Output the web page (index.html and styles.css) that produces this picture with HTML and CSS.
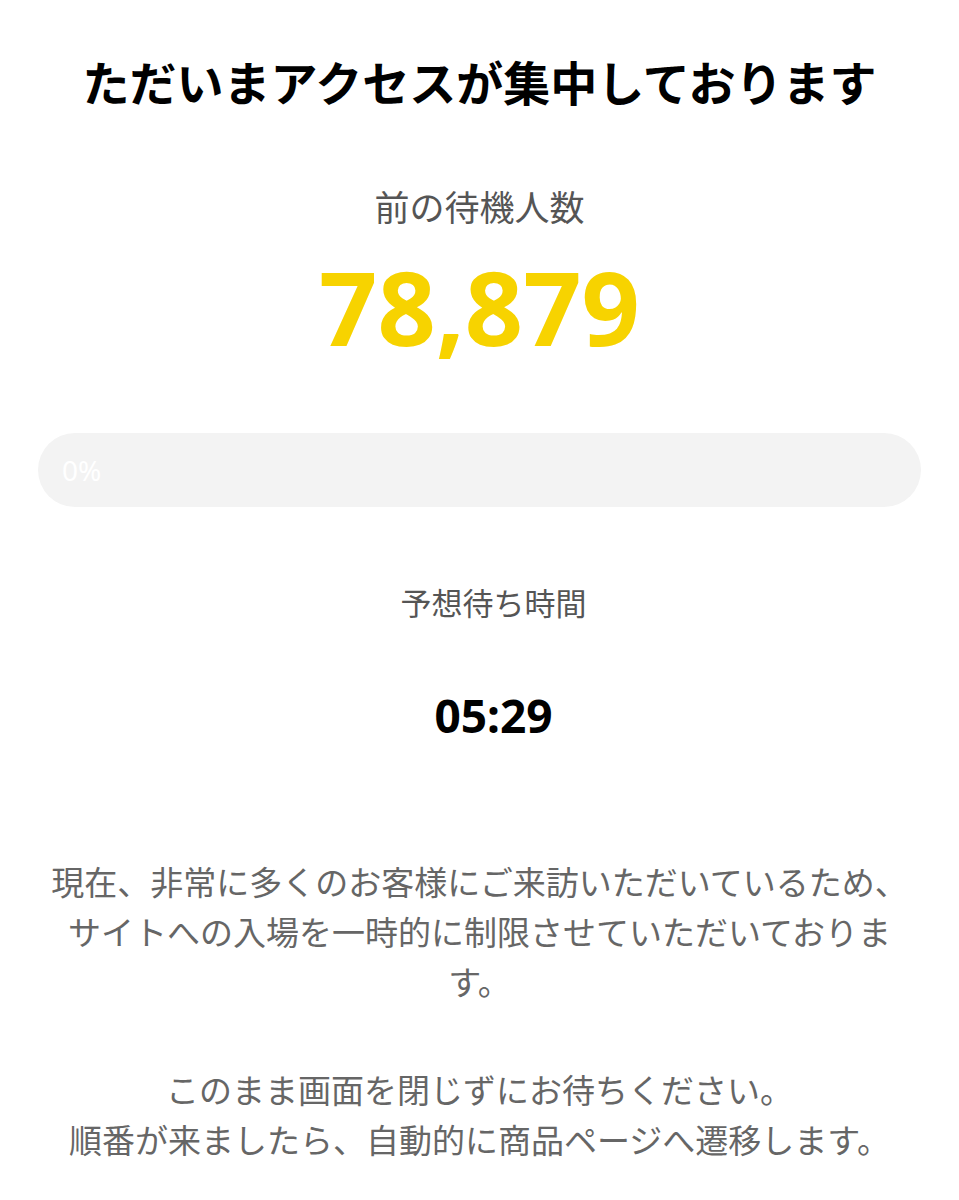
FILE: index.html
```html
<!DOCTYPE html>
<html lang="ja">
<head>
    <meta charset="UTF-8">
    <meta name="viewport" content="width=device-width, initial-scale=1.0">
    <title>待機中</title>
    <link rel="stylesheet" href="styles.css">
</head>
<body>

    <div class="queue">
        <h1 class="title">ただいまアクセスが集中しております</h1>

        <div class="ahead">
            <p class="label">前の待機人数</p>
            <p class="count">78,879</p>
        </div>

        <div class="progress">
            <div class="progress-fill" style="width: 0%"></div>
            <span class="progress-text">0%</span>
        </div>

        <div class="wait">
            <p class="label small">予想待ち時間</p>
            <p class="time">05:29</p>
        </div>

        <div class="message">
            <p>現在、非常に多くのお客様にご来訪いただいているため、サイトへの入場を一時的に制限させていただいております。</p>
            <p>このまま画面を閉じずにお待ちください。<br>順番が来ましたら、自動的に商品ページへ遷移します。</p>
        </div>
    </div>

</body>
</html>
```

FILE: styles.css
```css
body {
    margin: 0;
    background: #fff;
    color: #000;
    font-family: "Noto Sans", "Noto Sans CJK JP", sans-serif;
}
p { margin: 0; }
.queue {
    padding: 0 38px;
    text-align: center;
}
.title {
    margin: 0;
    padding-top: 46px;
    font-size: 47px;
    font-weight: 700;
    line-height: 1.5;
    font-family: "Noto Sans CJK JP", sans-serif;
}
.ahead {
    margin-top: 63px;
}
.label {
    color: #555;
    font-size: 35px;
    line-height: 1.5;
    font-family: "Noto Sans CJK JP", sans-serif;
}
.label.small {
    font-size: 31px;
}
.count {
    margin-top: 2px;
    color: #f7d300;
    font-size: 102px;
    font-weight: 700;
    line-height: 146px;
}
.progress {
    position: relative;
    margin-top: 53px;
    height: 74px;
    border-radius: 37px;
    background: #f3f3f3;
    overflow: hidden;
}
.progress-fill {
    height: 100%;
    background: #f7d300;
}
.progress-text {
    position: absolute;
    left: 24px;
    top: 50%;
    transform: translateY(-50%);
    color: #fff;
    font-size: 28px;
}
.wait {
    margin-top: 72px;
    padding-left: 28px;
}
.time {
    margin-top: 55px;
    font-size: 46px;
    font-weight: 700;
    line-height: 1.5;
}
.message {
    margin-top: 106px;
    color: #666;
    font-size: 33px;
    line-height: 50px;
    font-family: "Noto Sans CJK JP", sans-serif;
}
.message p + p {
    margin-top: 58px;
}
```
